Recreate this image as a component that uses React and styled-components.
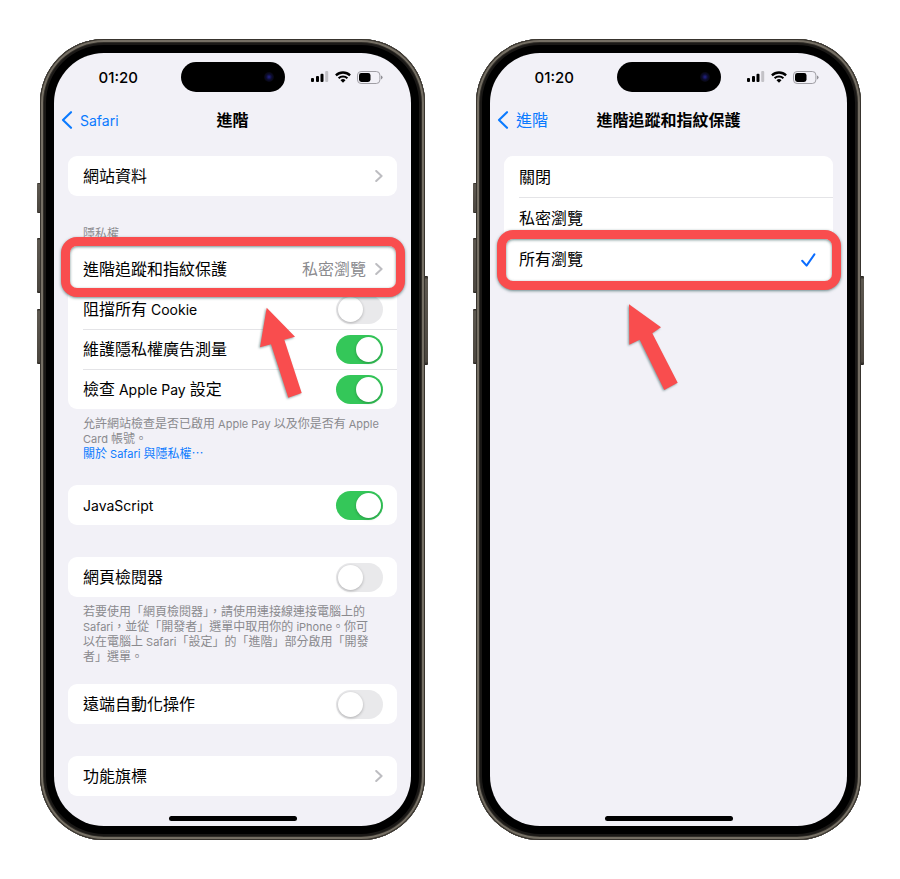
import React, { useState } from 'react'
import styled, { createGlobalStyle, css } from 'styled-components'

const leftArrow = 'M12.7 6.7 L41 35.7 L30.3 38.7 L47.7 92 L34.3 96.7 L17 43.3 L6 46.3 Z'
const rightArrow = 'M5 4.3 L37 27.3 L28.3 33.3 L53.7 82.7 L40.3 90 L15.7 39.7 L5.3 44.7 Z'

const browsingModes = ['關閉', '私密瀏覽', '所有瀏覽']

const StatusBar = () => (
  <Status>
    <Time>01:20</Time>
    <Island><Camera /></Island>
    <StatusIcons>
      <svg width="18" height="12" viewBox="0 0 18 12">
        <rect x="0" y="7" width="3" height="4" rx="1" />
        <rect x="5" y="5" width="3" height="6" rx="1" />
        <rect x="9.5" y="2.7" width="3" height="8.3" rx="1" />
        <rect x="14.2" y="0" width="3" height="11" rx="1" fill="#c3c2c7" />
      </svg>
      <svg width="16" height="12" viewBox="0 0 16 12">
        <path d="M0.9 4.4 A10.2 10.2 0 0 1 15.1 4.4" fill="none" stroke="#000" strokeWidth="2.3" />
        <path d="M3.6 7.3 A6.3 6.3 0 0 1 12.4 7.3" fill="none" stroke="#000" strokeWidth="2.1" />
        <path d="M5.5 9.2 A3.6 3.6 0 0 1 10.5 9.2 L8 11.8 Z" />
      </svg>
      <svg width="26" height="13" viewBox="0 0 26 13">
        <rect x="0.5" y="0.5" width="22.4" height="12" rx="3.6" fill="none" stroke="#9f9ea4" />
        <rect x="2" y="2" width="11.5" height="9" rx="2.4" />
        <path d="M24 4.6 Q25.6 5.2 25.6 6.5 Q25.6 7.8 24 8.4 Z" fill="#8f8e94" />
      </svg>
    </StatusIcons>
  </Status>
)

const Chevron = () => (
  <ChevronIcon width="8" height="12" viewBox="0 0 8 12">
    <path d="M1.2 1 L6.6 6 L1.2 11" />
  </ChevronIcon>
)

const Phone = ({ back, title, children }) => (
  <Frame>
    <SideKey $side="left" $top={144} $size={30} />
    <SideKey $side="left" $top={199} $size={55} />
    <SideKey $side="left" $top={270} $size={55} />
    <SideKey $side="right" $top={237} $size={89} />
    <Body>
      <Screen>
        <StatusBar />
        <NavBar>
          <BackLink href="#">
            <svg width="12" height="18" viewBox="0 0 12 18">
              <path d="M10 1.2 L2 9 L10 16.8" fill="none" stroke="#0a7aff" strokeWidth="2.1" strokeLinecap="round" strokeLinejoin="round" />
            </svg>
            <span>{back}</span>
          </BackLink>
          <Title>{title}</Title>
        </NavBar>
        <Content>{children}</Content>
        <HomeIndicator />
      </Screen>
    </Body>
  </Frame>
)

const Highlight = ({ above, below, arrow, arrowLeft, arrowTop }) => (
  <>
    <HighlightBox $above={above} $below={below} />
    <Arrow $left={arrowLeft} $top={arrowTop} width="60" height="104" viewBox="0 0 60 104">
      <path d={arrow} />
    </Arrow>
  </>
)

const ToggleRow = ({ label, defaultChecked }) => (
  <Row as="label">
    <Label>{label}</Label>
    <Switch type="checkbox" defaultChecked={defaultChecked} />
  </Row>
)

const AdvancedScreen = () => (
  <Phone back={<Latin>Safari</Latin>} title="進階">
    <Card>
      <Row as="button" type="button">
        <Label>網站資料</Label>
        <Chevron />
      </Row>
    </Card>
    <SectionTitle>隱私權</SectionTitle>
    <Card>
      <Row as="button" type="button" $marked>
        <Highlight above={12} below={8} arrow={leftArrow} arrowLeft={186} arrowTop={52} />
        <Label>進階追蹤和指紋保護</Label>
        <Value>私密瀏覽</Value>
        <Chevron />
      </Row>
      <ToggleRow label={<>阻擋所有<Latin> Cookie</Latin></>} />
      <ToggleRow label="維護隱私權廣告測量" defaultChecked />
      <ToggleRow label={<>檢查<Latin> Apple Pay </Latin>設定</>} defaultChecked />
    </Card>
    <Footnote>
      允許網站檢查是否已啟用<Latin> Apple Pay </Latin>以及你是否有<Latin> Apple</Latin><br />
      <Latin>Card </Latin>帳號。<br />
      <a href="#">關於<Latin> Safari </Latin>與隱私權⋯</a>
    </Footnote>
    <Card $gap={24}>
      <ToggleRow label={<Latin>JavaScript</Latin>} defaultChecked />
    </Card>
    <Card $gap={32}>
      <ToggleRow label="網頁檢閱器" />
    </Card>
    <Footnote>
      若要使用「網頁檢閱器」，請使用連接線連接電腦上的<br />
      <Latin>Safari</Latin>，並從「開發者」選單中取用你的<Latin> iPhone</Latin>。你可<br />
      以在電腦上<Latin> Safari</Latin>「設定」的「進階」部分啟用「開發<br />
      者」選單。
    </Footnote>
    <Card $gap={20}>
      <ToggleRow label="遠端自動化操作" />
    </Card>
    <Card $gap={32}>
      <Row as="button" type="button">
        <Label>功能旗標</Label>
        <Chevron />
      </Row>
    </Card>
  </Phone>
)

const ProtectionScreen = () => {
  const [mode, setMode] = useState(browsingModes[2])

  return (
    <Phone back="進階" title="進階追蹤和指紋保護">
      <Card>
        {
          browsingModes.map((name, index) => (
            <Row as="label" key={name} $tall $marked={index === 2}>
              {index === 2 && (
                <Highlight above={8} below={11} arrow={rightArrow} arrowLeft={120} arrowTop={62} />
              )}
              <Label>{name}</Label>
              <Radio type="radio" name="mode" checked={mode === name} onChange={() => setMode(name)} />
              {mode === name && (
                <svg width="18" height="16" viewBox="0 0 18 16">
                  <path d="M1.2 9.8 L5.6 14.6 L13.4 3.4" fill="none" stroke="#0a6cff" strokeWidth="2" strokeLinecap="round" strokeLinejoin="round" />
                </svg>
              )}
            </Row>
          ))
        }
      </Card>
    </Phone>
  )
}

const App = () => (
  <>
    <GlobalStyle />
    <Page>
      <AdvancedScreen />
      <ProtectionScreen />
    </Page>
  </>
)

export default App

const GlobalStyle = createGlobalStyle`
  * {
    box-sizing: border-box;
  }

  body {
    margin: 0;
    background: #fff;
    color: #000;
    font-family: Inter, 'Noto Sans CJK TC', sans-serif;
    font-size: 16px;
  }
`

const Page = styled.main`
  display: grid;
  grid-template-columns: 1fr 1fr;
  gap: 51px;
  padding: 39px 39px 39px 40px;
`

const Frame = styled.section`
  position: relative;
  display: flex;
`

const SideKey = styled.i`
  position: absolute;
  top: ${props => props.$top}px;
  ${props => props.$side}: -3px;
  width: 5px;
  height: ${props => props.$size}px;
  border-radius: 1px;
  background: linear-gradient(#25221e, #5d5850 4%, #4b463f 96%, #25221e);
`

const Body = styled.div`
  position: relative;
  flex: 1;
  display: flex;
  padding: 14px;
  border-radius: 64px;
  background: #000;
  box-shadow:
    inset 0 0 0 1px #38342e,
    inset 0 0 0 3px #756f64,
    inset 0 0 0 4px #2f2c27,
    inset 0 0 0 6px #1a1816;
`

const Screen = styled.div`
  flex: 1;
  display: flex;
  flex-direction: column;
  border-radius: 50px;
  background: #f2f1f7;
`

const Status = styled.div`
  display: grid;
  grid-template-columns: 1fr 104px 1fr;
  align-items: center;
  height: 48px;
`

const Time = styled.span`
  padding-left: 2px;
  text-align: center;
  font-size: 15px;
  font-weight: 500;
`

const Island = styled.div`
  display: flex;
  align-items: center;
  justify-content: flex-end;
  height: 30px;
  padding-right: 11px;
  border-radius: 15px;
  background: #000;
`

const Camera = styled.i`
  width: 10px;
  height: 10px;
  border-radius: 50%;
  background: radial-gradient(circle, #23238a 0, #0c0c30 40%, #07070f 70%);
`

const StatusIcons = styled.div`
  display: flex;
  align-items: center;
  gap: 6px;
  padding-left: 26px;
`

const NavBar = styled.header`
  display: grid;
  grid-template-columns: 1fr auto 1fr;
  align-items: center;
  height: 38px;
  padding: 0 7px;
  line-height: 20px;
`

const BackLink = styled.a`
  display: flex;
  align-items: center;
  gap: 7px;
  color: #0a7aff;
  text-decoration: none;
`

const Title = styled.h1`
  margin: 0;
  font-size: 16px;
  font-weight: 600;
`

const Content = styled.div`
  flex: 1;
  padding: 17px 14px 20px;
`

const Card = styled.div`
  margin-top: ${props => props.$gap || 0}px;
  border-radius: 9px;
  background: #fff;
`

const Row = styled.div`
  position: relative;
  display: flex;
  align-items: center;
  width: 100%;
  height: ${props => props.$tall ? 41 : 40}px;
  padding: 0 14px 0 15px;
  border: 0;
  background: none;
  color: inherit;
  font: inherit;
  line-height: 20px;
  text-align: left;

  & + &::before {
    content: '';
    position: absolute;
    top: 0;
    left: 15px;
    right: 0;
    height: 1px;
    background: #e4e4e7;
  }

  ${props => props.$marked && css`
    z-index: 1;
  `}
`

const Label = styled.span`
  flex: 1;
`

const Value = styled.span`
  margin-right: 9px;
  color: #8a8a8e;
`

/* Latin glyphs run larger than the Chinese ones around them */
const Latin = styled.span`
  font-size: 14px;
  line-height: 1;
`

const ChevronIcon = styled.svg`
  path {
    fill: none;
    stroke: #bdbdc1;
    stroke-width: 2;
    stroke-linecap: round;
    stroke-linejoin: round;
  }
`

const Switch = styled.input`
  appearance: none;
  width: 47px;
  height: 29px;
  margin: 0;
  padding: 2px;
  border-radius: 15px;
  background: #e9e9eb;

  &::before {
    content: '';
    display: block;
    width: 25px;
    height: 25px;
    border-radius: 50%;
    background: #fff;
    box-shadow: 0 1px 3px rgba(0, 0, 0, 0.25);
  }

  &:checked {
    background: #34c759;
  }

  &:checked::before {
    margin-left: auto;
  }
`

const Radio = styled.input`
  appearance: none;
  width: 0;
  margin: 0;
`

const SectionTitle = styled.h2`
  margin: 0;
  padding: 29px 15px 6px;
  color: #8a8a8e;
  font-size: 12px;
  font-weight: 400;
  line-height: 18px;
`

const Footnote = styled.p`
  margin: 0;
  padding: 7px 0 0 15px;
  color: #8a8a8e;
  font-size: 12px;
  line-height: 15px;
  white-space: nowrap;

  a {
    color: #0a7aff;
    text-decoration: none;
  }

  ${Latin} {
    font-size: 11px;
  }
`

const HomeIndicator = styled.div`
  align-self: center;
  width: 128px;
  height: 5px;
  margin-bottom: 5px;
  border-radius: 3px;
  background: #000;
`

const HighlightBox = styled.i`
  position: absolute;
  z-index: -1;
  top: -${props => props.$above}px;
  right: -8px;
  bottom: -${props => props.$below}px;
  left: -7px;
  border: 9px solid #f94d4e;
  border-radius: 16px;
  background: #fff;
  box-shadow: 0 1px 3px rgba(20, 70, 70, 0.6), inset 0 1px 3px rgba(20, 70, 70, 0.6);
`

const Arrow = styled.svg`
  position: absolute;
  top: ${props => props.$top}px;
  left: ${props => props.$left}px;
  fill: #f94d4e;
  filter: drop-shadow(-1px 1px 1px rgba(20, 70, 70, 0.5));
`
